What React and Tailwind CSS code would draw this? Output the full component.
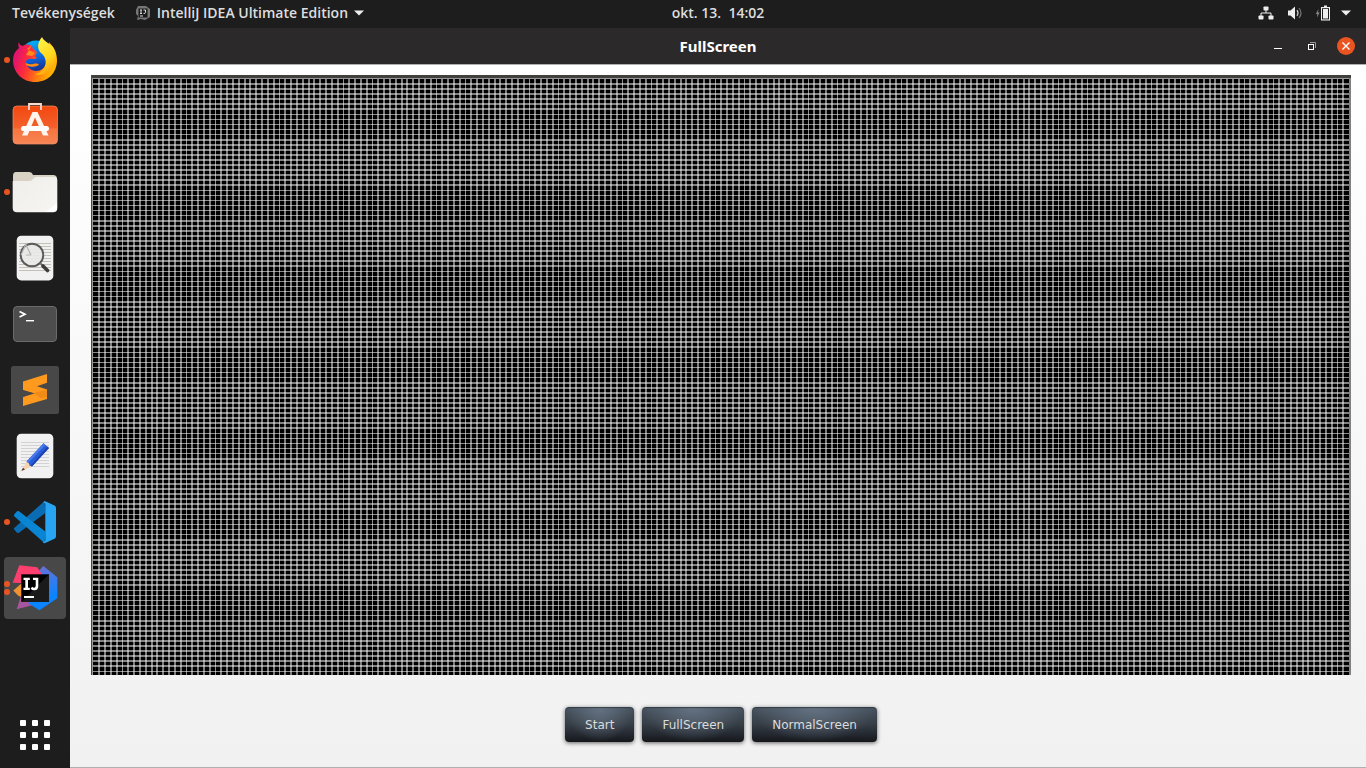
import React from "react";

const COL_STEP = 5.813;
const ROW_STEP = 5.0633;

/* Strokes that straddle two pixel rows come out two wide; near the pixel centre they are one wide. */
function snap(center, tolerance) {
  const frac = center - Math.floor(center);
  if (Math.abs(frac - 0.5) < tolerance) return [Math.floor(center), 1];
  return [Math.round(center) - 1, 2];
}

const COLS = Array.from({ length: 215 }, (_, i) => snap(8.3 + COL_STEP * i, 0.06));
const ROWS = Array.from({ length: 117 }, (_, i) => snap(9 + ROW_STEP * i, 0.18));

function Board() {
  return (
    <svg
      className="block h-[600px] w-full"
      viewBox="0 0 1260 600"
      preserveAspectRatio="none"
      shapeRendering="crispEdges"
      role="img"
      aria-label="Grid"
    >
      <rect width="1260" height="600" fill="#000" />
      {COLS.map(([x, w]) => (
        <rect key={x} x={x} y="3" width={w} height="597" fill="#fff" opacity={w === 1 ? 0.56 : 0.49} />
      ))}
      {ROWS.map(([y, h]) => (
        <rect key={y} x="1" y={y} width="1259" height={h} fill="#fff" opacity={h === 1 ? 0.54 : 0.5} />
      ))}
      <rect x="1" y="3" width="1259" height="1" fill="#989898" />
      <rect width="1260" height="3" fill="#403f3b" />
      <rect width="1" height="600" fill="#504844" />
      <rect x="1" y="3" width="1" height="597" fill="#a09c98" />
      <rect x="1258" y="3" width="2" height="597" fill="#808080" />
    </svg>
  );
}

function Icon({ children }) {
  return (
    <svg width="48" height="48" viewBox="0 0 48 48" aria-hidden="true">
      {children}
    </svg>
  );
}

const Firefox = () => (
  <Icon>
    <defs>
      <linearGradient id="fxBody" x1="0.1" y1="0.3" x2="0.95" y2="0.55">
        <stop offset="0" stopColor="#e3156b" />
        <stop offset="0.3" stopColor="#ff2c3a" />
        <stop offset="0.65" stopColor="#ff7a10" />
        <stop offset="1" stopColor="#ffb400" />
      </linearGradient>
      <linearGradient id="fxBlue" x1="0.3" y1="0" x2="0.6" y2="1">
        <stop offset="0" stopColor="#00b4f5" />
        <stop offset="0.5" stopColor="#0a70e8" />
        <stop offset="1" stopColor="#1c2a88" />
      </linearGradient>
      <linearGradient id="fxTail" x1="0.3" y1="0" x2="0.7" y2="1">
        <stop offset="0" stopColor="#fff44a" />
        <stop offset="0.6" stopColor="#ffd51c" />
        <stop offset="1" stopColor="#ff9a0c" />
      </linearGradient>
    </defs>
    <circle cx="25" cy="20" r="15.5" fill="url(#fxBlue)" />
    <path d="M8 6 C7 8 7 10 8 12 C4 15 2 19 2 24 C2 37 12 46 24 46 C37 46 46 37 46 24 C46 17 43 11 38 6 L36 26 C34 32 30 35 25 35 C20 35 16 31 15 27 C14 24 18 22 22 23 C26 23 27 21 24 21 C24 18 27 17 25 15 L22 13 L21 10 C17 8 14 8 12 10 C9 9 8 8 8 6Z" fill="url(#fxBody)" />
    <path d="M15 27 C20 30 24 26 28 28 C27 31 20 32 15 29Z" fill="#ff8a12" />
    <path d="M21 9 L16 13 L24 17 L21 20 L15 19Z" fill="#ff8a1c" />
    <path d="M31 1 C26 7 26 13 30 17 C35 21 36 27 33 32 C30 37 26 38 23 38 C29 40 37 38 41 33 C46 26 46 17 42 11 C39 7 33 6 31 1Z" fill="url(#fxTail)" />
  </Icon>
);

const Software = () => (
  <Icon>
    <defs>
      <linearGradient id="swBag" x1="0" y1="0" x2="0" y2="1">
        <stop offset="0" stopColor="#f2480f" />
        <stop offset="0.58" stopColor="#f4612c" />
        <stop offset="0.6" stopColor="#f6743f" />
        <stop offset="1" stopColor="#f68654" />
      </linearGradient>
    </defs>
    <rect x="2" y="4" width="44.5" height="38" rx="4" fill="url(#swBag)" stroke="#f5906a" strokeWidth="0.7" />
    <path d="M18 8 V2 H30 V8" fill="none" stroke="#fbdccd" strokeWidth="1.8" />
    <path d="M21.5 10 H26.5 L37.5 33.5 H32 L24 15.5 L16.5 33.5 H11Z" fill="#fff5ef" />
    <rect x="10" y="24" width="28" height="5" rx="2.5" fill="#fff" />
  </Icon>
);

const Files = () => (
  <Icon>
    <defs>
      <linearGradient id="flFront" x1="0" y1="0" x2="1" y2="1">
        <stop offset="0" stopColor="#efeeea" />
        <stop offset="0.86" stopColor="#f5f4f1" />
        <stop offset="0.87" stopColor="#fdfdfc" />
        <stop offset="1" stopColor="#fff" />
      </linearGradient>
    </defs>
    <path d="M2 8 Q2 4 5 4 H18 Q21 4 22 7 H42 Q46 7 46 11 V30 H2Z" fill="#d8d2c4" />
    <path d="M2 13 H18 Q21 13 22 11 Q23 9 26 9 H43 Q46.3 9 46.3 12 V40 Q46.3 44.3 42 44.3 H6 Q1.7 44.3 1.7 40 V13Z" fill="url(#flFront)" />
  </Icon>
);

const DocumentViewer = () => (
  <Icon>
    <rect x="5.7" y="1.8" width="36.6" height="44.6" rx="4.5" fill="#f1f1f1" />
    {[9, 12, 15, 18, 21, 24, 27, 30, 33, 36].map((y) => (
      <rect key={y} x="8" y={y} width="32" height="0.8" fill="#b9b6a8" />
    ))}
    <circle cx="21" cy="21" r="11.3" fill="#e9e9e7" fillOpacity="0.9" stroke="#5a5a5a" strokeWidth="1.9" />
    <path d="M14 9 L20 21 M10 21 L15 10 M15 21 L20 21" stroke="#b5b5b5" strokeWidth="1.2" fill="none" />
    <path d="M29.5 29.5 L32 32" stroke="#777" strokeWidth="2" />
    <path d="M32 32 L36.5 36.5" stroke="#3c3c3c" strokeWidth="3.6" strokeLinecap="round" />
  </Icon>
);

const Terminal = () => (
  <Icon>
    <rect x="2.5" y="6.5" width="43" height="35" rx="3.5" fill="#4d4d4d" stroke="#6b6b6b" />
    <path d="M8.5 11.5 L14 14.2 L8.5 17" fill="none" stroke="#fff" strokeWidth="1.7" />
    <rect x="15" y="20" width="8" height="1.4" fill="#fff" />
  </Icon>
);

const Sublime = () => (
  <Icon>
    <rect width="48" height="48" rx="2.5" fill="#484848" />
    <path d="M12 31 L36 23.5 V33 L12 40Z" fill="#ff9a1e" />
    <path d="M12 15.5 L36 8 V16.8 L26 20.3 L36 23.5 V31 L12 24Z" fill="#ff9a1e" />
    <path d="M22 27 L36 24 V31 L30 32Z" fill="#f08a18" />
    <path d="M12 24.3 L22 27.3 L12 30.7Z" fill="#484848" />
  </Icon>
);

const TextEditor = () => (
  <Icon>
    <rect x="5.7" y="1.7" width="36.6" height="44.6" rx="4.5" fill="#f1f1f1" />
    {[10, 13, 16, 19, 22, 25, 28, 31, 34].map((y) => (
      <rect key={y} x="10" y={y} width="28" height="0.9" fill="#cfcfcf" />
    ))}
    <path d="M10.3 39 L15.5 29.5 L21 34.5Z" fill="#f7d3ae" />
    <path d="M10.3 39 L12 35.8 L14 37.5Z" fill="#4a3b32" />
    <path d="M15.5 29.5 L32.5 11.3 L38 16 L21 34.5 L18.6 33.5 L18 31.5Z" fill="#2a5bd8" />
    <path d="M15.5 29.5 L32.5 11.3 L34.3 12.9 L17.3 31Z" fill="#4a7bea" />
    <path d="M19.5 33.7 L36.3 14.6 L38 16 L21 34.5Z" fill="#1d43b0" />
  </Icon>
);

const VsCode = () => (
  <Icon>
    <path d="M33.7 3 L3.2 30 Q2.5 30.7 3.2 31.5 L6 34.7 Q7 35.5 8 34.7 L34.3 15Z" fill="#0a6db4" />
    <path d="M33.7 45.3 L3.2 18.2 Q2.5 17.4 3.2 16.6 L6 13.3 Q7 12.5 8 13.3 L34.3 33.4Z" fill="#0a85d4" />
    <path d="M33.7 3 L43.5 7.5 Q45 8.3 45 10 V38.5 Q45 40 43.5 40.8 L33.7 45.3 Q32 45.3 31.5 43.5 Q34.3 44.5 34.3 42 V6 Q34.3 4.3 31.8 4.8Z" fill="#28a5f2" />
  </Icon>
);

const IntelliJ = () => (
  <Icon>
    <defs>
      <linearGradient id="ijBlue" x1="0.5" y1="0" x2="0.6" y2="0.7">
        <stop offset="0" stopColor="#6a6fd6" />
        <stop offset="0.6" stopColor="#2f7df0" />
        <stop offset="1" stopColor="#0a84ff" />
      </linearGradient>
    </defs>
    <path d="M2.3 26.5 L11 19 V33.5 L7 31.5Z" fill="#f0922f" />
    <path d="M10 32 L5.7 45.3 L24 40.5 L24 30Z" fill="#a855a0" />
    <path d="M26 9 L32.3 2 L46.3 13.3 V34.3 L28.3 46.3 L17 39 L34 30Z" fill="url(#ijBlue)" />
    <path d="M1.7 18.7 L8.3 1.3 L26.3 3.3 L32 12 L20 22 L10 19Z" fill="#fc3f6e" />
    <rect x="10.3" y="10.3" width="27.7" height="27.7" fill="#000" />
    <path d="M10.3 38 L38 10.3 V38Z" fill="#1a1a1a" />
    <path d="M12.5 13.8 H18.8 V16 H17 V23.8 H18.8 V26 H12.5 V23.8 H14.3 V16 H12.5Z" fill="#fff" />
    <path d="M22 13.8 H27.3 V22 Q27.3 26.2 23.4 26.2 Q21 26.2 19.6 24.7 L21.2 22.8 Q22.1 23.8 23.1 23.8 Q24.7 23.8 24.7 21.8 V16 H22Z" fill="#fff" />
    <rect x="13" y="32" width="10" height="2" fill="#fff" />
  </Icon>
);

const APPS = [
  { name: "Firefox", Art: Firefox, windows: 1 },
  { name: "Ubuntu Software", Art: Software, windows: 0 },
  { name: "Files", Art: Files, windows: 1 },
  { name: "Document Viewer", Art: DocumentViewer, windows: 0 },
  { name: "Terminal", Art: Terminal, windows: 0 },
  { name: "Sublime Text", Art: Sublime, windows: 0 },
  { name: "Text Editor", Art: TextEditor, windows: 0 },
  { name: "Visual Studio Code", Art: VsCode, windows: 1 },
  { name: "IntelliJ IDEA", Art: IntelliJ, windows: 2, active: true },
];

function DockItem({ app }) {
  const { name, Art, windows, active } = app;
  return (
    <button
      type="button"
      aria-label={name}
      className={`relative flex size-[62px] items-center justify-center rounded-[4px] ${active ? "bg-[#484848]" : ""}`}
    >
      <Art />
      <span className="absolute inset-y-0 left-0 flex flex-col justify-center gap-[2px]">
        {Array.from({ length: windows }, (_, i) => (
          <span key={i} className="size-[6px] rounded-full bg-[#e95420]" />
        ))}
      </span>
    </button>
  );
}

function Dock() {
  return (
    <nav aria-label="Dock" className="flex w-[70px] shrink-0 flex-col items-center gap-1 bg-[#1d1d1d] pt-px pb-0.5">
      {APPS.map((app) => (
        <DockItem key={app.name} app={app} />
      ))}
      <button type="button" aria-label="Show Applications" className="mt-auto flex size-[62px] items-center justify-center">
        <span className="grid grid-cols-3 gap-[6px]">
          {Array.from({ length: 9 }, (_, i) => (
            <span key={i} className="size-[6px] rounded-[1px] bg-white" />
          ))}
        </span>
      </button>
    </nav>
  );
}

function Caret() {
  return (
    <svg width="10" height="6" viewBox="0 0 10 6" aria-hidden="true">
      <path d="M0 0.5 H10 L5 5.5Z" fill="#eee" />
    </svg>
  );
}

function TopBar() {
  return (
    <header className="grid h-7 shrink-0 grid-cols-[70px_1fr_auto_1fr] items-center bg-[#1d1d1d] font-['Open_Sans','Noto_Sans',sans-serif] text-[14px] leading-[26px] font-semibold text-[#dedede]">
      <div className="col-span-2 flex items-center gap-5 pb-0.5 pl-3">
        <button type="button">Tevékenységek</button>
        <button type="button" className="flex items-center gap-[6px]">
          <svg width="16" height="16" viewBox="0 0 16 16" aria-hidden="true">
            <path d="M1 5 L3 1 L8 1 L11 1 L15 4 V12 L10 15 L6 14 L2 15 L3 11 L1 9Z" fill="#777" />
            <rect x="3.5" y="3.5" width="9" height="9" fill="#1c1c1c" />
            <path d="M5 5 H7 M6 5 V8.5 M5 8.5 H7 M8.5 5 H10.5 V7.5 Q10.5 8.6 8.5 8.4 M5 11 H8" stroke="#ddd" fill="none" />
          </svg>
          <span>IntelliJ IDEA Ultimate Edition</span>
          <Caret />
        </button>
      </div>
      <button type="button" className="pb-0.5 whitespace-pre">okt. 13.  14:02</button>
      <button type="button" aria-label="System" className="mr-[15px] ml-auto flex items-center pb-0.5">
        <svg className="mr-[13px]" width="16" height="16" viewBox="0 0 16 16" aria-hidden="true">
          <g fill="#eee">
            <rect x="5.5" y="1.5" width="5" height="4" rx="0.8" />
            <rect x="0.5" y="10.5" width="5" height="4" rx="0.8" />
            <rect x="10.5" y="10.5" width="5" height="4" rx="0.8" />
          </g>
          <path d="M8 5 V8 M3 11 V8 H13 V11" stroke="#eee" fill="none" />
        </svg>
        <svg className="mr-[12px]" width="16" height="16" viewBox="0 0 16 16" aria-hidden="true">
          <path d="M1 5.5 H3.5 L8 1.5 V14.5 L3.5 10.5 H1Z" fill="#eee" />
          <path d="M10 5.2 Q12 8 10 10.8" stroke="#ccc" strokeWidth="1.2" fill="none" />
          <path d="M12 3 Q16 8 12 13" stroke="#777" strokeWidth="1.2" fill="none" />
        </svg>
        <svg className="mr-[10px]" width="16" height="16" viewBox="0 0 16 16" aria-hidden="true">
          <path d="M3.5 4 L0.8 9 H2.4 L2 12.5 L4.7 7.5 H3Z" fill="#888" />
          <path d="M9 0.5 H12 V2 H15 V15.5 H6 V2 H9Z" fill="#eee" />
          <path d="M7 3.2 H14 V14.4 H7Z" fill="#1d1d1d" />
          <rect x="8" y="4" width="5" height="9.5" fill="#eee" />
        </svg>
        <Caret />
      </button>
    </header>
  );
}

function TitleBar() {
  return (
    <div className="grid h-9 shrink-0 grid-cols-[1fr_auto_1fr] items-center bg-[#2c292a] text-white">
      <h1 className="col-start-2 text-[15px] leading-5 font-bold">FullScreen</h1>
      <div className="ml-auto flex items-center gap-4 pr-[11px]">
        <button type="button" aria-label="Minimize" className="size-[18px]">
          <svg width="18" height="18" viewBox="0 0 18 18" aria-hidden="true">
            <rect x="5" y="11" width="8" height="1" fill="#fff" />
          </svg>
        </button>
        <button type="button" aria-label="Restore" className="size-[18px]">
          <svg width="18" height="18" viewBox="0 0 18 18" aria-hidden="true">
            <path d="M7 5.5 H12.5 V11" stroke="#999" fill="none" />
            <rect x="5.5" y="7.5" width="5" height="5" stroke="#fff" fill="none" />
          </svg>
        </button>
        <button type="button" aria-label="Close" className="size-[18px] rounded-full bg-[#e95420]">
          <svg width="18" height="18" viewBox="0 0 18 18" aria-hidden="true">
            <path d="M5.5 5.5 L12.5 12.5 M12.5 5.5 L5.5 12.5" stroke="#fff" strokeWidth="1.4" />
          </svg>
        </button>
      </div>
    </div>
  );
}

function ActionButton({ children }) {
  return (
    <button
      type="button"
      className="h-[35px] rounded-[4px] bg-[radial-gradient(ellipse_at_50%_0%,#647282_0%,rgba(82,96,110,0)_70%),linear-gradient(#485460_0%,#384048_45%,#262b33_75%,#15181b_100%)] px-5 pt-0.5 font-['DejaVu_Sans',sans-serif] text-[12px] leading-[33px] text-[#dcdcdc] shadow-[0_1px_4px_rgba(0,0,0,0.6),inset_0_1px_1px_rgba(40,48,56,0.7)]"
    >
      {children}
    </button>
  );
}

export default function App() {
  return (
    <div className="flex min-h-screen flex-col bg-[#1d1d1d] font-['Noto_Sans','Open_Sans',sans-serif]">
      <TopBar />
      <div className="flex flex-1">
        <Dock />
        <section className="flex min-w-0 flex-1 flex-col">
          <TitleBar />
          <main className="flex flex-1 flex-col border-y border-[#b0b0b0] bg-linear-to-b from-white to-[#f1f1f1] pt-[10px] pr-[15px] pl-[21px]">
            <Board />
            <div className="flex justify-center gap-2 pt-8">
              <ActionButton>Start</ActionButton>
              <ActionButton>FullScreen</ActionButton>
              <ActionButton>NormalScreen</ActionButton>
            </div>
          </main>
        </section>
      </div>
    </div>
  );
}
